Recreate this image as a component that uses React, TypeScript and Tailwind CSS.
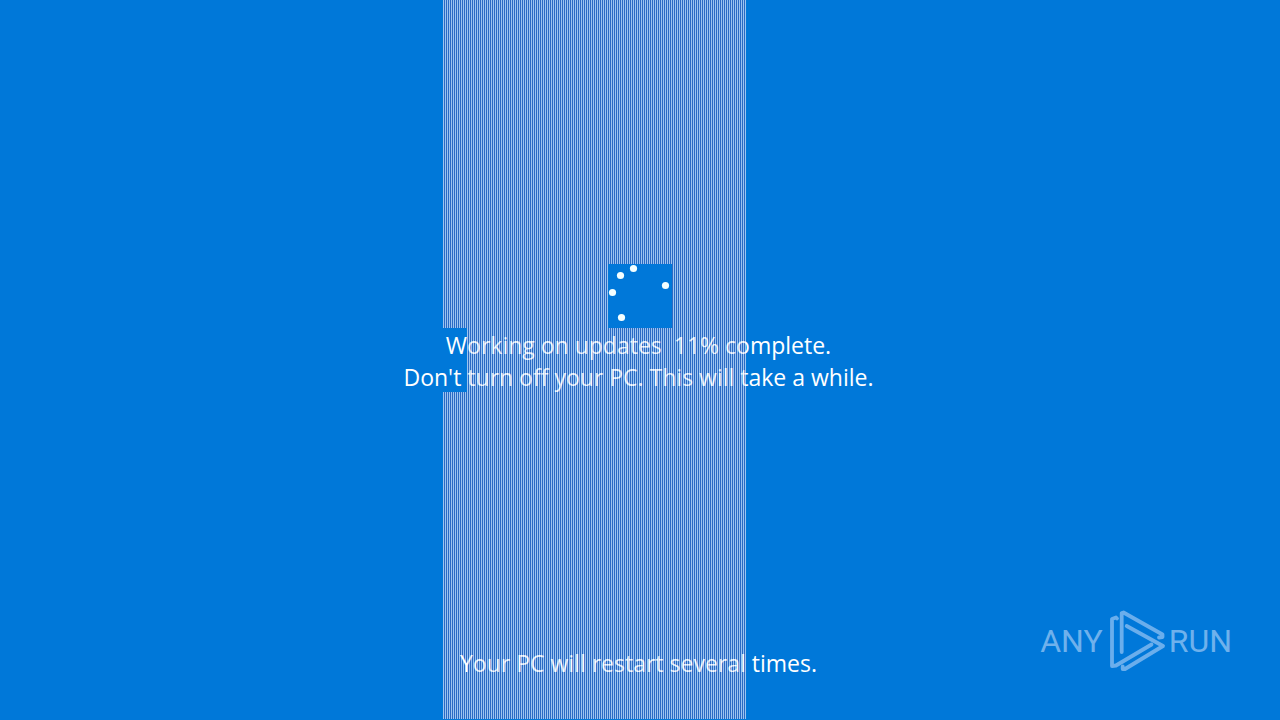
const STRIPES =
  "bg-[repeating-linear-gradient(90deg,#9cc4f0_0px_1px,#2a6ac4_1px_2px)]";

// darkens every second column only, so text shows through the stripes
const STRIPES_OVER_TEXT =
  "bg-[repeating-linear-gradient(90deg,transparent_0px_1px,rgba(42,106,196,0.22)_1px_2px)]";

const DOTS = [
  { x: 25, y: 4 },
  { x: 12, y: 11 },
  { x: 4, y: 28 },
  { x: 57, y: 21 },
  { x: 13, y: 53 },
];

function Spinner() {
  return (
    <svg
      role="img"
      aria-label="Loading"
      viewBox="0 0 64 64"
      className="size-16 bg-[#0078d9]"
    >
      {DOTS.map((dot) => (
        <circle
          key={`${dot.x}-${dot.y}`}
          cx={dot.x + 0.5}
          cy={dot.y + 0.5}
          r="3.6"
          fill="#f4ffff"
        />
      ))}
    </svg>
  );
}

function Watermark() {
  return (
    <div className="flex items-center font-[Roboto,'Liberation_Sans',sans-serif] text-[32px] text-[#6fb1ec]">
      <span>ANY</span>
      <svg
        viewBox="0 0 58 64"
        className="ml-1.5 h-16 w-[58px]"
        fill="none"
        stroke="#6aaeec"
        strokeWidth="3.8"
        strokeLinecap="round"
        strokeLinejoin="round"
      >
        <path d="M8 9.5 L7 8.5 L3 10 V57 L7 56.5 L42.5 35.5" />
        <path d="M12.7 43 V4 L14.5 3.5 L53.5 25.5 L53.5 28 L50 28.5" />
        <path d="M17.7 17 L54 37 L16 60 L13.7 60 V57.5" />
      </svg>
      <span className="ml-0.5">RUN</span>
    </div>
  );
}

export default function App() {
  return (
    <main className="relative isolate flex min-h-screen flex-col overflow-hidden bg-[#0078d9] font-['Open_Sans','Noto_Sans',sans-serif] text-[23px] leading-8 text-white">
      {/* corrupted column of the display */}
      <div
        className={`absolute top-0 bottom-px left-[443px] -z-10 w-[303px] ${STRIPES}`}
      >
        <div className="absolute top-[328px] left-0 h-16 w-6 bg-[#0078d9]" />
      </div>

      <div className="flex flex-col items-center pt-[264px]">
        <Spinner />
        <div className="pt-px pr-[3px] text-center">
          <p className="whitespace-pre">Working on updates  11% complete.</p>
          <p>Don't turn off your PC. This will take a while.</p>
        </div>
      </div>

      <p className="mt-auto pr-[3px] pb-[41px] text-center">
        Your PC will restart several times.
      </p>

      <div
        className={`pointer-events-none absolute top-[328px] bottom-px left-[467px] w-[279px] ${STRIPES_OVER_TEXT}`}
      />

      <div className="absolute right-12 bottom-[47px]">
        <Watermark />
      </div>
    </main>
  );
}
